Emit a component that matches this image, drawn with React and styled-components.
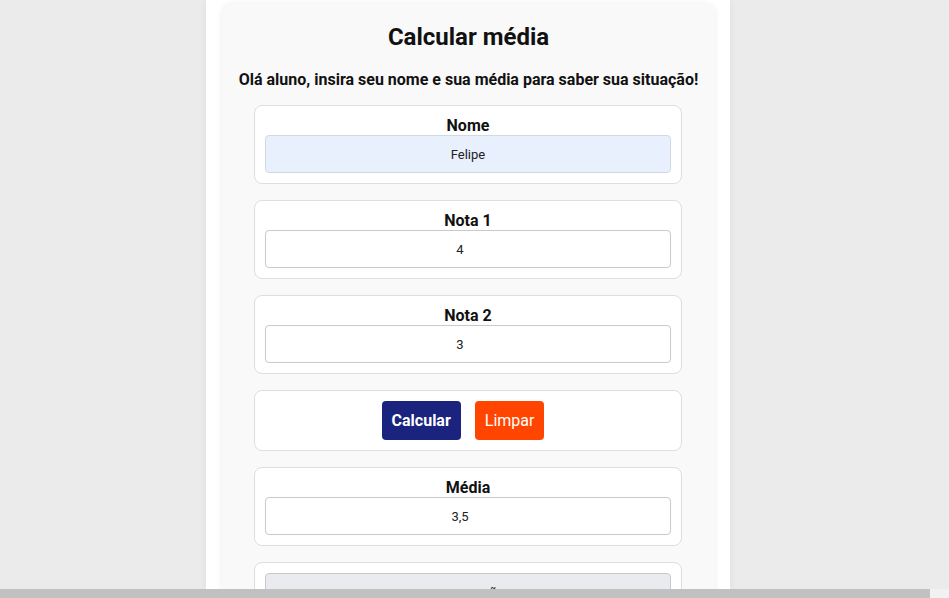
import React from "react";
import styled, { createGlobalStyle } from "styled-components";

const Global = createGlobalStyle`
  html, body { margin: 0; padding: 0; background: #ebebeb; }
  body { font-family: Roboto, "Liberation Sans", sans-serif; overflow: hidden; }
  * { box-sizing: border-box; }
`;

const Page = styled.div`
  width: 936px;
  height: 598px;
  display: flex;
  justify-content: center;
`;

const Column = styled.div`
  width: 524px;
  height: 598px;
  background: #ffffff;
  box-shadow: 0 0 8px rgba(0, 0, 0, 0.06);
  padding: 4px 15px 0 16px;
`;

const Card = styled.div`
  background: #f9f9f9;
  border-radius: 10px;
  box-shadow: 0 0 6px rgba(0, 0, 0, 0.08);
  padding: 19px 32px 20px;
  display: flex;
  flex-direction: column;
  align-items: flex-start;
  min-height: 620px;
`;

const Title = styled.h1`
  margin: 0;
  width: 100%;
  font-size: 24px;
  line-height: 28px;
  font-weight: 700;
  color: #111;
  text-align: center;
`;

const Subtitle = styled.h2`
  margin: 19px -20px 16px;
  align-self: stretch;
  font-size: 16px;
  line-height: 19px;
  font-weight: 700;
  color: #111;
  text-align: center;
  white-space: nowrap;
`;

const List = styled.div`
  display: flex;
  flex-direction: column;
  gap: 16px;
  width: 428px;
`;

const Box = styled.div`
  background: #fff;
  border: 1px solid #dedede;
  border-radius: 8px;
  padding: 10px;
  display: flex;
  flex-direction: column;
  align-items: stretch;
`;

const Label = styled.label`
  font-size: 16px;
  line-height: 19px;
  font-weight: 700;
  color: #111;
  text-align: center;
`;

const Input = styled.input`
  height: 38px;
  width: 100%;
  padding: 0 ${(p) => (p.$numeric ? "18px" : "2px")} 0 2px;
  border: 1px solid ${(p) => (p.$variant === "auto" ? "#d3d9e4" : "#c9c9c9")};
  border-radius: 4px;
  background: ${(p) =>
    p.$variant === "auto" ? "#e8f0fe" : p.$variant === "disabled" ? "#e9ebee" : "#fff"};
  font-family: Roboto, "Liberation Sans", sans-serif;
  font-size: 13px;
  color: #222;
  text-align: center;
  outline: none;
`;

const Buttons = styled.div`
  display: flex;
  justify-content: center;
  gap: 14px;
`;

const Button = styled.button`
  height: 39px;
  padding: 0 10px;
  border: none;
  border-radius: 4px;
  font-family: Roboto, "Liberation Sans", sans-serif;
  font-size: 16px;
  line-height: 19px;
  color: #fff;
  font-weight: ${(p) => (p.$bold ? 700 : 400)};
  background: ${(p) => p.$bg};
  margin-right: ${(p) => p.$mr || 0}px;
`;

const Scrollbar = styled.div`
  position: fixed;
  left: 0;
  right: 0;
  bottom: 0;
  height: 9px;
  background: #f1f1f1;
  display: flex;
`;

const Thumb = styled.div`
  width: 930px;
  height: 100%;
  background: #c1c1c1;
`;

export default function App() {
  return (
    <>
      <Global />
      <Page>
        <Column>
          <Card>
            <Title>Calcular média</Title>
            <Subtitle>Olá aluno, insira seu nome e sua média para saber sua situação!</Subtitle>
            <List>
              <Box>
                <Label>Nome</Label>
                <Input $variant="auto" defaultValue="Felipe" />
              </Box>
              <Box>
                <Label>Nota 1</Label>
                <Input $numeric defaultValue="4" />
              </Box>
              <Box>
                <Label>Nota 2</Label>
                <Input $numeric defaultValue="3" />
              </Box>
              <Box>
                <Buttons>
                  <Button $bold $bg="#1a237e">Calcular</Button>
                  <Button $bg="#ff4500" $mr={10}>Limpar</Button>
                </Buttons>
              </Box>
              <Box>
                <Label>Média</Label>
                <Input $numeric defaultValue="3,5" />
              </Box>
              <Box>
                <Input $variant="disabled" disabled defaultValue="recuperação" />
              </Box>
            </List>
          </Card>
        </Column>
      </Page>
      <Scrollbar>
        <Thumb />
      </Scrollbar>
    </>
  );
}
